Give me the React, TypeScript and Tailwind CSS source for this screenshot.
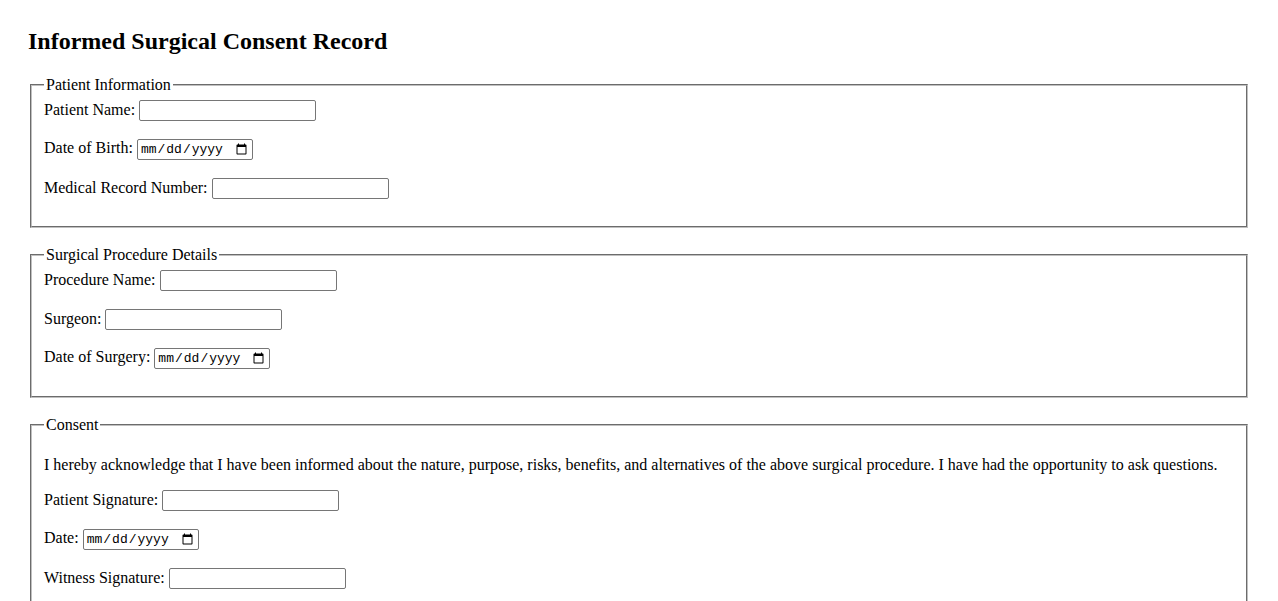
import type { ReactNode } from "react";

function Row({ label, type = "text" }: { label: string; type?: "text" | "date" }) {
  return (
    <div className="mb-[18px]">
      <label>{label}</label>{" "}
      {type === "date" ? (
        <input
          type="date"
          className="inline-block h-[21px] w-[116px] rounded-[2px] border border-[#767676] bg-white px-[2px] py-[1px] align-baseline font-['Liberation_Mono',monospace] text-[13px] text-black"
        />
      ) : (
        <input
          type="text"
          className="inline-block h-[21px] w-[177px] rounded-[2px] border border-[#767676] bg-white px-[2px] py-[1px] align-baseline font-['Liberation_Sans',Arial,sans-serif] text-[13.33px] text-black"
        />
      )}
    </div>
  );
}

function Section({ title, children }: { title: string; children: ReactNode }) {
  return (
    <fieldset className="mx-[2px] mb-[18px] border-2 border-[#c0c0c0] px-3 pt-[6px] pb-[9px] [border-style:groove]">
      <legend className="px-[2px]">{title}</legend>
      {children}
    </fieldset>
  );
}

export default function App() {
  return (
    <div className="min-h-screen bg-white px-[28px] pt-[28px] font-['Liberation_Serif','Times_New_Roman',serif] text-base leading-[normal] text-black">
      <h1 className="mb-[21px] text-2xl leading-[normal] font-bold">Informed Surgical Consent Record</h1>

      <form>
        <Section title="Patient Information">
          <Row label="Patient Name:" />
          <Row label="Date of Birth:" type="date" />
          <Row label="Medical Record Number:" />
        </Section>

        <Section title="Surgical Procedure Details">
          <Row label="Procedure Name:" />
          <Row label="Surgeon:" />
          <Row label="Date of Surgery:" type="date" />
        </Section>

        <Section title="Consent">
          <p className="my-4">
            I hereby acknowledge that I have been informed about the nature, purpose, risks, benefits, and
            alternatives of the above surgical procedure. I have had the opportunity to ask questions.
          </p>
          <Row label="Patient Signature:" />
          <Row label="Date:" type="date" />
          <Row label="Witness Signature:" />
        </Section>
      </form>
    </div>
  );
}
